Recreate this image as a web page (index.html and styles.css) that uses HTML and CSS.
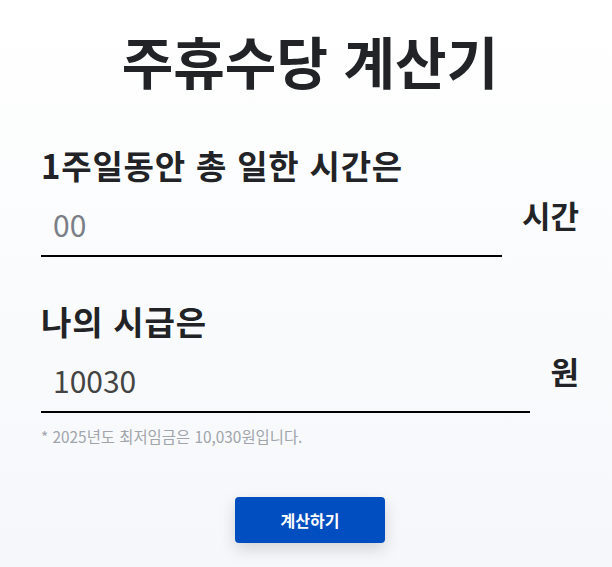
FILE: index.html
```html
<!DOCTYPE html>
<html lang="ko">
<head>
<meta charset="utf-8">
<link rel="stylesheet" href="styles.css">
</head>
<body>
<main class="calc">
  <h1 class="title">주휴수당 계산기</h1>
  <section class="field">
    <label class="label" for="hours">1주일동안 총 일한 시간은</label>
    <div class="row">
      <input id="hours" class="input input-short" type="text" placeholder="00">
      <span class="unit">시간</span>
    </div>
  </section>
  <section class="field">
    <label class="label" for="wage">나의 시급은</label>
    <div class="row">
      <input id="wage" class="input" type="text" value="10030">
      <span class="unit">원</span>
    </div>
    <p class="note">* 2025년도 최저임금은 10,030원입니다.</p>
  </section>
  <div class="actions">
    <button class="btn" type="button">계산하기</button>
  </div>
</main>
</body>
</html>
```

FILE: styles.css
```css
html, body {
  margin: 0;
  padding: 0;
}
body {
  min-height: 567px;
  background: linear-gradient(180deg, #ffffff 0%, #f5f7fa 100%);
  font-family: "Noto Sans CJK KR", "Noto Sans", sans-serif;
  color: #222326;
}
.calc {
  padding: 20px 33px 0 41px;
  display: flex;
  flex-direction: column;
}
.title {
  margin: 0;
  text-align: center;
  font-size: 56px;
  font-weight: 700;
  line-height: 80px;
  color: #222326;
}
.field {
  margin-top: 45px;
  display: flex;
  flex-direction: column;
}
.field + .field {
  margin-top: 44px;
}
.label {
  font-size: 33px;
  font-weight: 700;
  line-height: 40px;
  letter-spacing: 0.8px;
}
.row {
  display: flex;
  align-items: center;
  gap: 20px;
}
.input {
  flex: 1;
  min-width: 0;
  border: none;
  border-bottom: 2px solid #000;
  background: transparent;
  padding: 8px 12px 0;
  height: 72px;
  box-sizing: border-box;
  font-family: "Noto Sans CJK KR", sans-serif;
  font-size: 30px;
  color: #444;
  outline: none;
}
.input::placeholder {
  color: #7a7f87;
}
.unit {
  font-size: 31px;
  font-weight: 700;
  margin-bottom: 14px;
}
.note {
  margin: 12px 0 0;
  font-size: 15.4px;
  line-height: 22px;
  color: #a0a4ab;
}
.actions {
  display: flex;
  justify-content: center;
  margin-top: 50px;
}
.btn {
  width: 150px;
  height: 46px;
  border: none;
  border-radius: 4px;
  background: #004ebf;
  color: #fff;
  font-family: "Noto Sans CJK KR", sans-serif;
  font-size: 16px;
  font-weight: 700;
  box-shadow: 0 6px 16px rgba(0, 0, 0, 0.15);
}
```
